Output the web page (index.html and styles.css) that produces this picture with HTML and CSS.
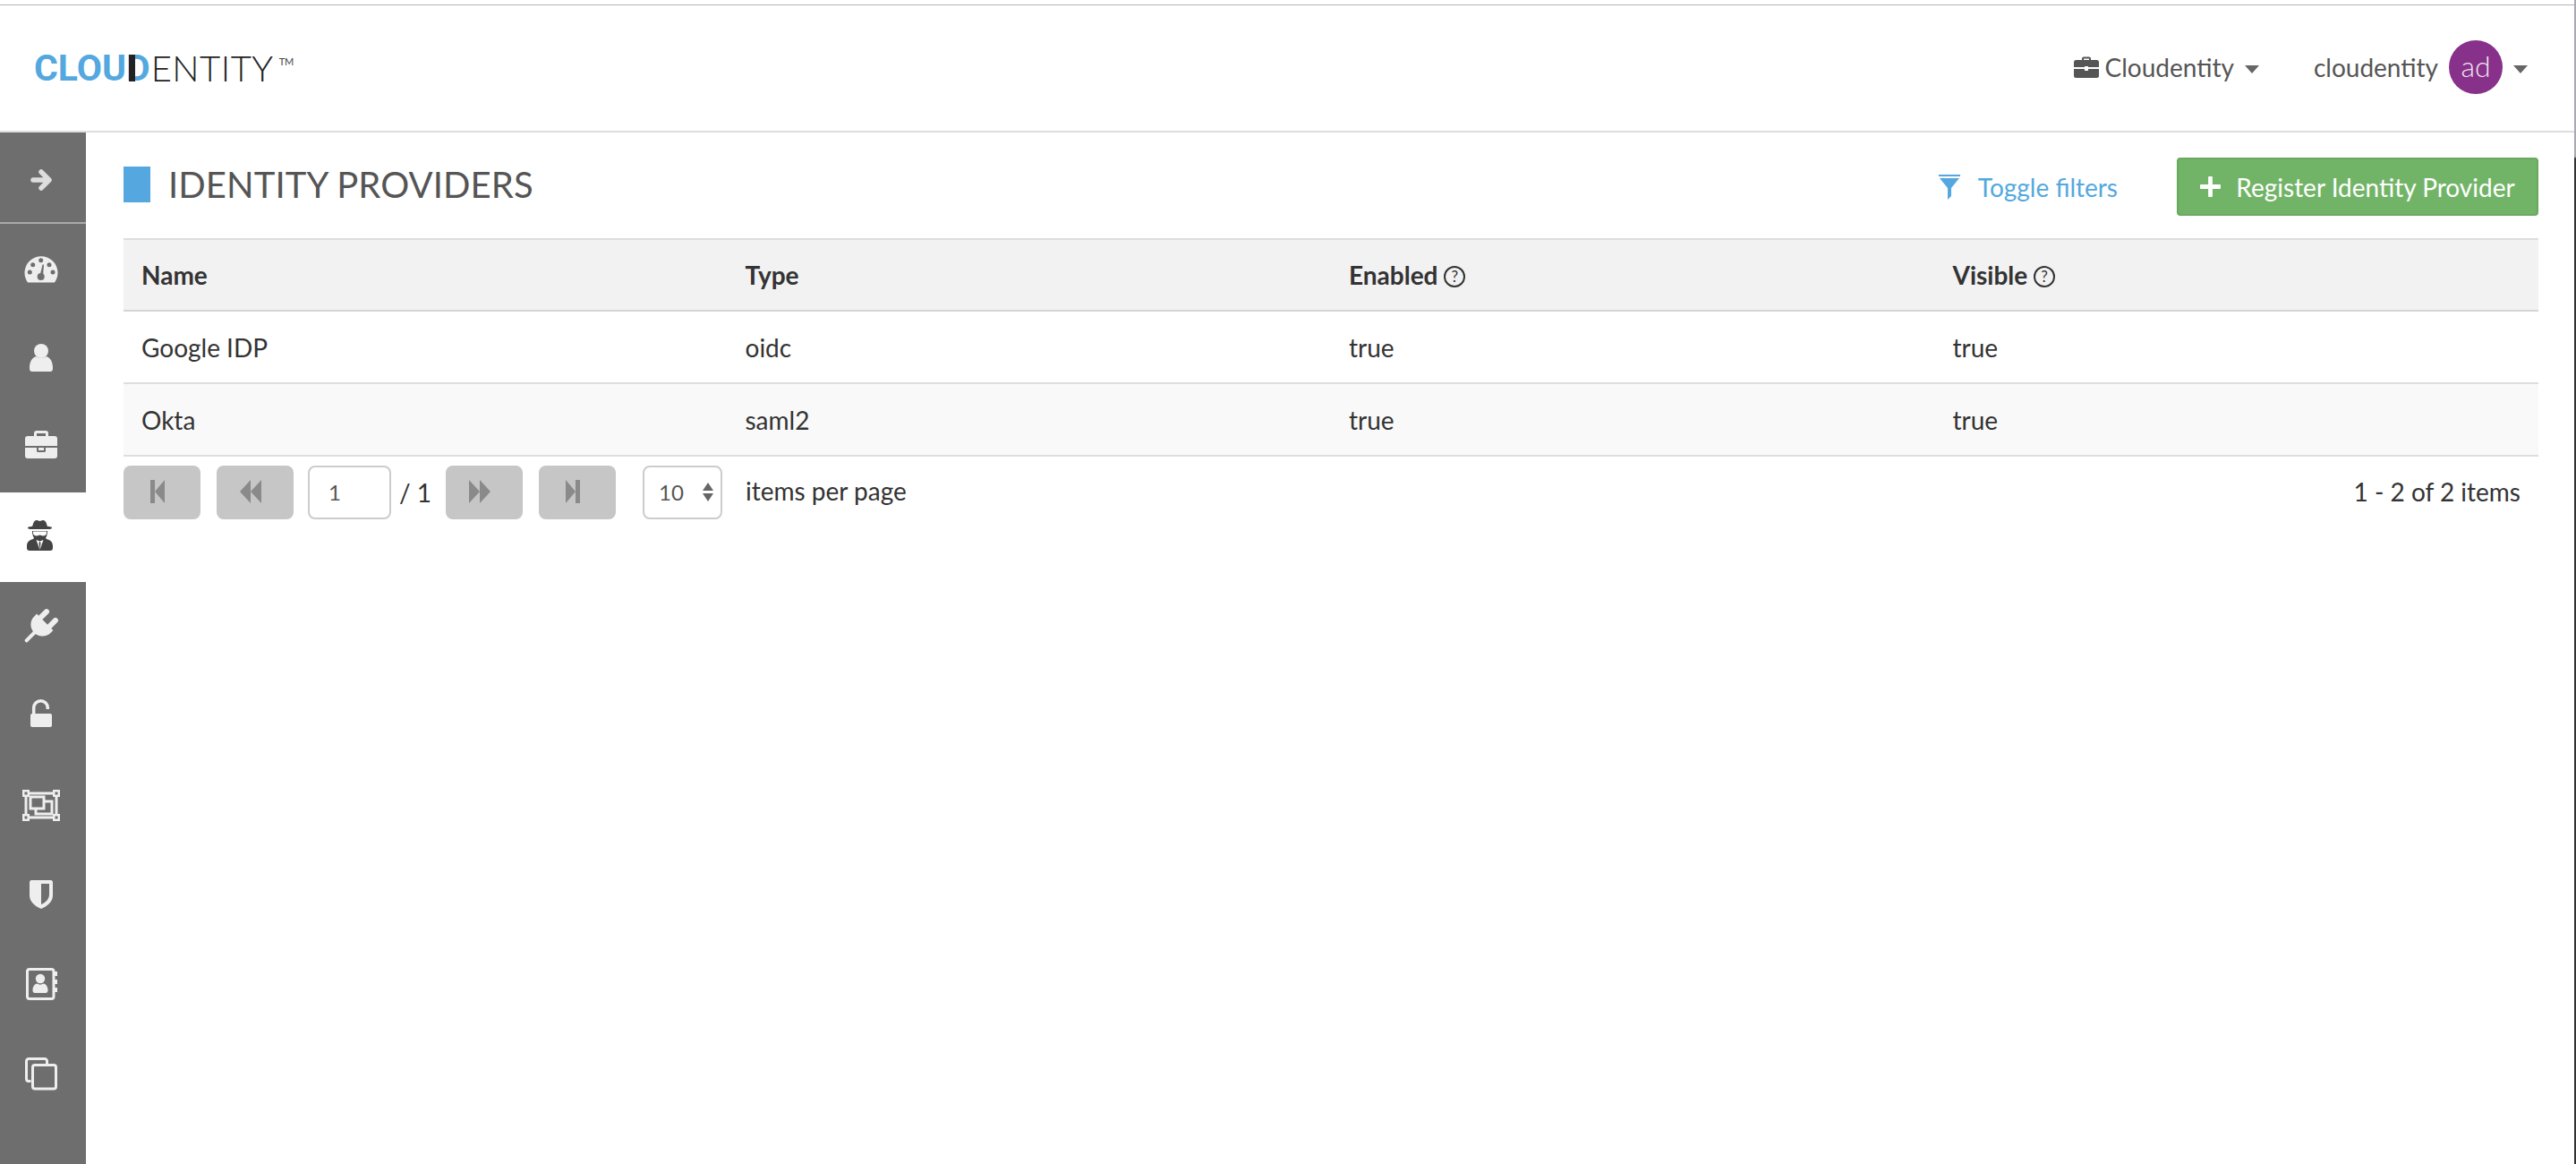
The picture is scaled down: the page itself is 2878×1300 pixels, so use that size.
FILE: index.html
```html
<!DOCTYPE html>
<html lang="en">
<head>
    <meta charset="UTF-8">
    <title>Identity Providers</title>
    <link rel="stylesheet" href="styles.css">
</head>
<body>
    <div class="page">
        <div class="top-edge"></div>
        <header class="topbar">
            <div class="logo"><span class="logo-cloud">CLOU<span class="logo-d">D</span></span><span class="logo-entity">ENTITY</span><span class="logo-tm">TM</span></div>
            <div class="topbar-right">
                <div class="tenant">
                    <svg class="tenant-icon" viewBox="0 0 28 24"><path d="M9 4V2.500A2 2 0 0 1 11 .5h6a2 2 0 0 1 2 2V4h6.500A2.500 2.500 0 0 1 28 6.500V12H16v-1h-4v1H0V6.500A2.500 2.500 0 0 1 2.500 4zm2 0h6V2.500h-6zM0 14h12v2h4v-2h12v7.500a2.500 2.500 0 0 1-2.500 2.500h-23A2.500 2.500 0 0 1 0 21.500z"/></svg>
                    <span>Cloudentity</span>
                    <span class="caret"></span>
                </div>
                <div class="user">
                    <span>cloudentity</span>
                    <span class="avatar">ad</span>
                    <span class="caret"></span>
                </div>
            </div>
        </header>

        <div class="layout">
            <nav class="sidebar">
                <a class="side-item side-toggle">
                    <svg viewBox="0 0 48 48"><path class="line toggle-arrow" d="M13 27h17M22 18l9 9-9 9"/></svg>
                </a>
                <a class="side-item">
                    <svg viewBox="0 0 48 48"><path d="M7 39.500A18.500 18.500 0 1 1 37 39.500z"/><g class="cut"><circle cx="21.700" cy="14.700" r="2.500"/><circle cx="12.700" cy="19.700" r="2.500"/><circle cx="31" cy="19.700" r="2.500"/><circle cx="9.300" cy="28" r="2.500"/><circle cx="35" cy="28" r="2.500"/><circle cx="21.700" cy="33" r="4"/><path d="M20.500 32l3-12.500h1.500L24 33z"/></g></svg>
                </a>
                <a class="side-item">
                    <svg viewBox="0 0 48 48"><circle cx="22" cy="16" r="8"/><path d="M9 35c0-6 2-11 7-13 3 2 9 2 12 0 5 2 7 7 7 13 0 3-1 4-3 4H12c-2 0-3-1-3-4z"/></svg>
                </a>
                <a class="side-item">
                    <svg viewBox="0 0 48 48"><path d="M14 11V8a3 3 0 0 1 3-3h10a3 3 0 0 1 3 3v3h7a3 3 0 0 1 3 3v8H4v-8a3 3 0 0 1 3-3zm3 0h10V8H17zM4 24h13v3.500a1.500 1.500 0 0 0 1.500 1.500h7a1.500 1.500 0 0 0 1.500-1.500V24h13v9a3 3 0 0 1-3 3H7a3 3 0 0 1-3-3zM19 24h6v3h-6z"/></svg>
                </a>
                <a class="side-item active">
                    <svg viewBox="0 0 48 48"><path d="M13 9c1-3 2-4 4-4 2 0 2 1 3.500 1S22 5 24 5c2 0 3 1 4 4l1 3c3 0 5 .5 5 1.500S32 15 29 15H12c-3 0-5-.5-5-1.500S9 12 12 12z"/><path d="M12 17h17c0 4-1 6-2 8l1 1c4 1 7 3 7 8v2c0 2-1 3-3 3H9c-2 0-3-1-3-3v-2c0-5 3-7 7-8l1-1c-1-2-2-4-2-8z"/><path class="spy-cut" d="M13 17.500h15v2c0 2-2 3-4 3-1.500 0-2.500-1-3.500-1s-2 1-3.500 1c-2 0-4-1-4-3zM16.500 27l4 1.500-1 2 1 7.500-4-11zM24.500 27l-4 1.500 1 2-1 7.500 4-11z"/></svg>
                </a>
                <a class="side-item">
                    <svg viewBox="0 0 48 48"><g transform="rotate(45 22 23)"><rect x="12" y="4.500" width="6" height="15" rx="3"/><rect x="26" y="4.500" width="6" height="15" rx="3"/><path d="M9 17h26v4a13 13 0 0 1-26 0z"/><rect x="20" y="30" width="4" height="18" rx="1.500"/></g></svg>
                </a>
                <a class="side-item">
                    <svg viewBox="0 0 48 48"><path class="line lock-bow" d="M13.700 22V14.500a7.800 7.800 0 0 1 15.600 0V16"/><rect x="10" y="21" width="24" height="15" rx="2"/></svg>
                </a>
                <a class="side-item">
                    <svg viewBox="0 0 48 48"><g class="line thin"><path d="M7 10h30M7 37h30M5 12v23M39 12v23"/><path d="M10 14h15v13H10z"/><path d="M25 19h9v14H16v-6"/></g><path d="M1 6h8v8H1zm34 0h8v8h-8zM1 33h8v8H1zm34 0h8v8h-8z"/><path class="cut" d="M3.500 8.500h3v3h-3zm34 0h3v3h-3zm-34 27h3v3h-3zm34 0h3v3h-3z"/></svg>
                </a>
                <a class="side-item">
                    <svg viewBox="0 0 48 48"><path d="M9 9.500C9 8 10 7 11 7h22c1 0 2 1 2 2.500V24c0 7-6 12-13 15C15 36 9 31 9 24zM22 11v23c5-2 9-6 9-11V11z" fill-rule="evenodd"/></svg>
                </a>
                <a class="side-item">
                    <svg viewBox="0 0 48 48"><rect class="line thin" x="6.500" y="6.500" width="29.500" height="33" rx="2.500"/><circle cx="21" cy="17" r="5.200"/><path d="M12.500 30c0-4 2-7 5-7.500 2 1.500 5 1.500 7 0 3 .5 5 3.500 5 7.500 0 2-1 3-2.500 3H15c-1.500 0-2.500-1-2.500-3z"/><path d="M36 9h4v5h-4zm0 9h4v5h-4zm0 9h4v5h-4z"/></svg>
                </a>
                <a class="side-item">
                    <svg viewBox="0 0 48 48"><g class="line thin"><path d="M10.500 31.500H8a2.500 2.500 0 0 1-2.500-2.500V9A2.500 2.500 0 0 1 8 6.500h18a2.500 2.500 0 0 1 2.500 2.500v4"/><rect x="12.500" y="13.500" width="26" height="26.500" rx="2.500"/></g></svg>
                </a>
            </nav>

            <main class="content">
                <div class="page-head">
                    <h1 class="page-title"><span class="title-mark"></span>IDENTITY PROVIDERS</h1>
                    <div class="page-actions">
                        <a class="toggle-filters">
                            <svg class="filter-icon" viewBox="0 0 24 28"><path d="M0 0h24v2H0zM1 4h22l-9 11v9l-4 4V15z"/></svg>
                            Toggle filters
                        </a>
                        <button class="btn-register" type="button"><svg class="plus-icon" viewBox="0 0 24 24"><path d="M9.500 1a1 1 0 0 1 1-1h3a1 1 0 0 1 1 1v8.500H23a1 1 0 0 1 1 1v3a1 1 0 0 1-1 1h-8.500V23a1 1 0 0 1-1 1h-3a1 1 0 0 1-1-1v-8.500H1a1 1 0 0 1-1-1v-3a1 1 0 0 1 1-1h8.500z"/></svg>Register Identity Provider</button>
                    </div>
                </div>

                <table class="idp-table">
                    <thead>
                        <tr>
                            <th>Name</th>
                            <th>Type</th>
                            <th>Enabled <span class="help">?</span></th>
                            <th>Visible <span class="help">?</span></th>
                        </tr>
                    </thead>
                    <tbody>
                        <tr>
                            <td>Google IDP</td>
                            <td>oidc</td>
                            <td>true</td>
                            <td>true</td>
                        </tr>
                        <tr>
                            <td>Okta</td>
                            <td>saml2</td>
                            <td>true</td>
                            <td>true</td>
                        </tr>
                    </tbody>
                </table>

                <div class="pager">
                    <button class="pager-btn" type="button"><svg class="icon-end" viewBox="0 0 16 26"><path d="M0 0h5v26H0zM5 13L16 0v26z"/></svg></button>
                    <button class="pager-btn" type="button"><svg class="icon-step" viewBox="0 0 24 26"><path d="M0 13L12 0v26zM12 13L24 0v26z"/></svg></button>
                    <div class="page-input">1</div>
                    <span class="page-total">/ 1</span>
                    <button class="pager-btn" type="button"><svg class="icon-step" viewBox="0 0 24 26"><path d="M0 0l12 13L0 26zM12 0l12 13-12 13z"/></svg></button>
                    <button class="pager-btn" type="button"><svg class="icon-end" viewBox="0 0 16 26"><path d="M0 0l11 13L0 26zM11 0h5v26h-5z"/></svg></button>
                    <div class="page-size">10<span class="spinner"><span class="spin-up"></span><span class="spin-down"></span></span></div>
                    <span class="per-page">items per page</span>
                    <span class="page-count">1 - 2 of 2 items</span>
                </div>
            </main>
        </div>
    </div>
    <div class="window-edge"></div>
</body>
</html>
```
FILE: styles.css
```css
* {
    box-sizing: border-box;
}
html, body {
    height: 100%;
}
body {
    display: flex;
    margin: 0;
    background-color: #fff;
    color: #333;
    font-family: Lato, "Open Sans", sans-serif;
    font-size: 28px;
    overflow: hidden;
}
.page {
    flex: 1;
    min-width: 0;
}
.window-edge {
    width: 2px;
    background: linear-gradient(#a9a9b0 0, #a9a9b0 175px, #333 177px, #333 100%);
}
.top-edge {
    height: 6px;
    border-bottom: 1px solid #b4b4b4;
}
.topbar {
    height: 142px;
    border-bottom: 2px solid #ddd;
    display: flex;
    align-items: center;
    justify-content: space-between;
    padding: 0 52px 0 38px;
}
.logo {
    display: flex;
    align-items: flex-start;
    height: 30px;
    line-height: 30px;
}
.logo-cloud {
    font-family: Roboto, sans-serif;
    font-size: 41px;
    font-weight: 700;
    color: #54a8df;
}
.logo-d {
    display: inline-block;
    position: relative;
}
.logo-d::before {
    content: "";
    position: absolute;
    left: 3px;
    top: 0;
    width: 7px;
    height: 30px;
    background-color: #222;
}
.logo-entity {
    margin-left: 1px;
    font-size: 40px;
    font-weight: 300;
    letter-spacing: 0.5px;
    color: #222;
}
.logo-tm {
    margin-left: 6px;
    font-size: 11px;
    line-height: 16px;
    color: #444;
}
.topbar-right {
    display: flex;
    align-items: center;
    color: #555;
    margin-top: -2px;
}
.tenant {
    display: flex;
    align-items: center;
    margin-right: 61px;
}
.tenant-icon {
    width: 28px;
    height: 24px;
    margin-right: 7px;
    fill: #555;
}
.caret {
    display: inline-block;
    width: 0;
    height: 0;
    margin-left: 12px;
    margin-top: 4px;
    border-left: 8px solid transparent;
    border-right: 8px solid transparent;
    border-top: 9px solid #666;
}
.user {
    display: flex;
    align-items: center;
}
.avatar {
    width: 60px;
    height: 60px;
    margin-left: 12px;
    border-radius: 50%;
    background-color: #87318a;
    color: #f0e6f0;
    font-size: 32px;
    font-weight: 300;
    line-height: 58px;
    text-align: center;
}
.layout {
    display: flex;
    height: calc(100vh - 148px);
}
.sidebar {
    width: 96px;
    flex-shrink: 0;
    background-color: #6e6e6e;
}
.side-item {
    display: flex;
    align-items: center;
    justify-content: center;
    height: 100px;
    color: #eee;
}
.side-toggle {
    height: 102px;
    border-bottom: 2px solid #aaa;
}
.side-item svg {
    width: 48px;
    height: 48px;
    fill: #eee;
}
.side-item.active {
    background-color: #fff;
}
.side-item.active svg {
    fill: #444;
}
.side-item .line {
    fill: none;
    stroke: #eee;
}
.side-item .toggle-arrow {
    stroke: #ddd;
    stroke-width: 5.5;
    stroke-linecap: round;
    stroke-linejoin: round;
}
.side-item .lock-bow {
    stroke-width: 3.5;
}
.side-item .thin {
    stroke-width: 3;
}
.side-item .cut {
    fill: #6e6e6e;
}
.side-item .spy-cut {
    fill: #fff;
}
.content {
    flex: 1;
    min-width: 0;
    padding: 0 40px 0 42px;
}
.page-head {
    display: flex;
    align-items: flex-start;
    justify-content: space-between;
    height: 118px;
    padding-top: 28px;
}
.page-title {
    display: flex;
    align-items: center;
    margin: 10px 0 0;
    height: 40px;
    color: #555;
    font-size: 40px;
    font-weight: 400;
    letter-spacing: 0.1px;
}
.title-mark {
    width: 30px;
    height: 40px;
    margin-right: 20px;
    background-color: #54a8df;
}
.page-actions {
    display: flex;
    align-items: center;
}
.toggle-filters {
    display: flex;
    align-items: center;
    margin-right: 66px;
    color: #54a8df;
}
.filter-icon {
    width: 24px;
    height: 28px;
    margin-right: 20px;
    fill: #54a8df;
}
.btn-register {
    display: flex;
    align-items: center;
    justify-content: center;
    width: 404px;
    height: 65px;
    border: 2px solid #6aa85f;
    border-radius: 4px;
    background-color: #72b467;
    color: #fff;
    font-family: inherit;
    font-size: 28px;
}
.plus-icon {
    width: 23px;
    height: 23px;
    margin-right: 17px;
    fill: #fff;
}
.idp-table {
    width: 100%;
    border-collapse: collapse;
    table-layout: fixed;
}
.idp-table th, .idp-table td {
    padding: 0 20px;
    text-align: left;
    font-size: 28px;
}
.idp-table th {
    height: 80px;
    background-color: #f2f2f2;
    border-top: 2px solid #ddd;
    border-bottom: 2px solid #d4d4d4;
    font-weight: 700;
}
.idp-table td {
    height: 81px;
    border-bottom: 2px solid #ddd;
}
.idp-table tbody tr:nth-child(even) {
    background-color: #f9f9f9;
}
.help {
    display: inline-block;
    width: 24px;
    height: 24px;
    border: 2px solid #333;
    border-radius: 50%;
    font-size: 17px;
    font-weight: 400;
    line-height: 20px;
    text-align: center;
    vertical-align: 3px;
}
.pager {
    display: flex;
    align-items: center;
    height: 60px;
    margin-top: 10px;
}
.pager-btn {
    display: flex;
    align-items: center;
    justify-content: center;
    width: 86px;
    height: 60px;
    margin-right: 18px;
    padding: 0 10px 2px 0;
    border: none;
    border-radius: 8px;
    background-color: #c6c6c6;
}
.pager-btn svg {
    height: 26px;
    fill: #8a8a8a;
}
.icon-end {
    width: 16px;
}
.icon-step {
    width: 24px;
}
.page-input, .page-size {
    display: flex;
    align-items: center;
    height: 60px;
    padding-bottom: 2px;
    border: 2px solid #ccc;
    border-radius: 8px;
    background-color: #fff;
    color: #555;
    font-size: 24px;
}
.page-input {
    width: 93px;
    margin-left: -2px;
    padding-left: 21px;
}
.page-total {
    margin: 0 17px 0 9px;
    width: 35px;
    white-space: nowrap;
}
.page-size {
    justify-content: space-between;
    width: 89px;
    margin-left: 12px;
    margin-right: 26px;
    padding-left: 16px;
    padding-right: 8px;
}
.spinner {
    display: flex;
    flex-direction: column;
    gap: 3px;
}
.spin-up, .spin-down {
    width: 0;
    height: 0;
    border-left: 6px solid transparent;
    border-right: 6px solid transparent;
}
.spin-up {
    border-bottom: 9px solid #666;
}
.spin-down {
    border-top: 9px solid #666;
}
.per-page {
    margin-bottom: 4px;
}
.page-count {
    margin-left: auto;
    margin-right: 20px;
    margin-bottom: 3px;
}
```
